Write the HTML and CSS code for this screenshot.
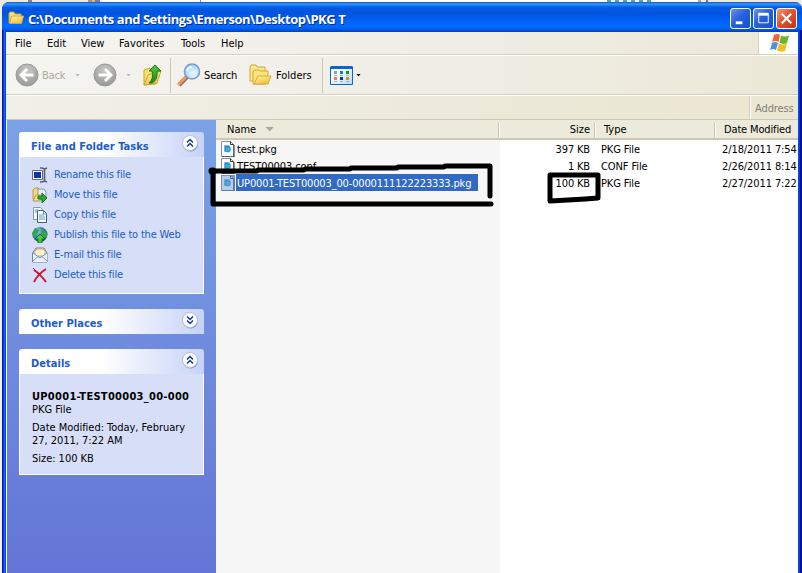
FILE: index.html
```html
<!DOCTYPE html>
<html lang="en">
<head>
<meta charset="utf-8">
<title>PKG T</title>
<link rel="stylesheet" href="styles.css">
</head>
<body>
<svg width="0" height="0" class="defs" aria-hidden="true">
  <defs>
    <linearGradient id="gold" x1="0" y1="0" x2="0.6" y2="1"><stop offset="0" stop-color="#fff6a8"/><stop offset="1" stop-color="#f3c040"/></linearGradient>
    <radialGradient id="grey" cx=".5" cy=".3" r=".7"><stop offset="0" stop-color="#c9c9c7"/><stop offset="1" stop-color="#999997"/></radialGradient>
    <radialGradient id="lens" cx=".6" cy=".65" r=".6"><stop offset="0" stop-color="#f0fcff"/><stop offset="1" stop-color="#9fd6f8"/></radialGradient>
    <linearGradient id="green" x1="0" y1="0" x2="0" y2="1"><stop offset="0" stop-color="#52c93e"/><stop offset="1" stop-color="#188a18"/></linearGradient>
    <radialGradient id="globe" cx=".35" cy=".3" r=".8"><stop offset="0" stop-color="#8fd0f5"/><stop offset=".5" stop-color="#3978c4"/><stop offset="1" stop-color="#173a80"/></radialGradient>
    <linearGradient id="screen" x1="0" y1="0" x2="1" y2="1"><stop offset="0.3" stop-color="#fff"/><stop offset="1" stop-color="#b5d8fa"/></linearGradient>
    <symbol id="file" viewBox="0 0 14 16"><path d="M.5.5h9l3 3v12H.5z" fill="#fff" stroke="#858fa0"/><path d="M9.5.5v3h3M13 4v12H1" fill="none" stroke="#26313f"/><path d="M3 4h6l1 7H3z" fill="#c4dbef"/><path d="M3.500 4.500h4l2 2v3l-2 2-4-1z" fill="#2987cf"/><path d="M5 6l4 1-1 3-3 1z" fill="#30b9d5"/></symbol>
    <symbol id="up" viewBox="0 0 18 18"><circle cx="9.500" cy="10" r="7.500" fill="#8094c8"/><circle cx="9" cy="9" r="7.500" fill="#fff" stroke="#b5c0df"/><path d="M6 8.500l3-3 3 3M6 12.500l3-3 3 3" fill="none" stroke="#0d3aa3" stroke-width="1.500"/></symbol>
    <symbol id="down" viewBox="0 0 18 18"><circle cx="9.500" cy="10" r="7.500" fill="#8094c8"/><circle cx="9" cy="9" r="7.500" fill="#fff" stroke="#b5c0df"/><path d="M6 5.500l3 3 3-3M6 9.500l3 3 3-3" fill="none" stroke="#0d3aa3" stroke-width="1.500"/></symbol>
  </defs>
</svg>
<div class="behind"><i class="b1"></i><i class="b2"></i><i class="b3"></i><i class="b4"></i><i class="b5"></i></div>
<main class="window">
  <header class="titlebar">
    <svg class="title-icon" viewBox="0 0 16 14"><path d="M1 12V2l1-1h4l1 2h6v3" fill="#fbe48b" stroke="#d39a28"/><path d="M3.500 5h12l-2 7.500H1.500z" fill="url(#gold)" stroke="#dca437"/></svg>
    <h1>C:\Documents and Settings\Emerson\Desktop\PKG T</h1>
    <div class="controls">
      <span class="ctl"><svg viewBox="0 0 20 20"><path d="M5 13h7v3H5z" fill="#fff"/></svg></span>
      <span class="ctl"><svg viewBox="0 0 20 20"><path d="M5 5.500h10v9H5z" fill="none" stroke="#fff"/><path d="M4.500 4h11v3h-11z" fill="#fff"/></svg></span>
      <span class="ctl close"><svg viewBox="0 0 20 20"><path d="M5 5l10 10M15 5L5 15" stroke="#fff" stroke-width="2.300"/></svg></span>
    </div>
  </header>
  <nav class="menubar">
    <span class="m1">File</span><span class="m2">Edit</span><span class="m3">View</span><span class="m4">Favorites</span><span class="m5">Tools</span><span class="m6">Help</span>
    <div class="flag"><svg viewBox="0 0 20 19" width="20" height="19"><path d="M4 2q3-2 6 0L8.500 9Q5 7 2 9z" fill="#f26534"/><path d="M11 2.500q4 2 8 0L17 10q-4 2-7.500-.5z" fill="#67b52c"/><path d="M2 10q3-2 6 0l-2 7q-3-2-6 0z" fill="#4c91df"/><path d="M9 10.500q4 2 8 0L15 18q-4 1.500-8-.5z" fill="#f4bd24"/></svg></div>
  </nav>
  <div class="toolbar">
    <svg class="nav-icon" viewBox="0 0 24 24"><circle cx="12" cy="12" r="11" fill="url(#grey)" stroke="#999"/><path d="M18.500 12H7M12 6l-6 6 6 6" fill="none" stroke="#fff" stroke-width="2.800"/></svg>
    <span class="back">Back</span><i class="drop dim d1"></i>
    <svg class="nav-icon forward" viewBox="0 0 24 24"><circle cx="12" cy="12" r="11" fill="url(#grey)" stroke="#999"/><path d="M5.500 12H17M12 6l6 6-6 6" fill="none" stroke="#fff" stroke-width="2.800"/></svg>
    <i class="drop dim d2"></i>
    <svg class="folder-up" viewBox="0 0 20 23"><path d="M1 6l6-2 1 2 5-1v15L1 21z" fill="#f9e16a" stroke="#d0a22c"/><path d="M5 11l13-4-4 12L1 21z" fill="url(#gold)" stroke="#d0a22c"/><path d="M6 7l6-6 6 6h-4q1 9-5 12H6q5-4 3-12z" fill="url(#green)" stroke="#187b20"/></svg>
    <i class="sep s1"></i>
    <svg class="magnifier" viewBox="0 0 24 24"><path d="M2 22l8-8" stroke="#8c6a74" stroke-width="4.500"/><path d="M1 22l8-8" stroke="#f29a50" stroke-width="3"/><circle cx="15" cy="8.500" r="7.500" fill="url(#lens)" stroke="#8298d0" stroke-width="1.600"/><path d="M10 8q1-4 5-4" stroke="#fff" fill="none" stroke-width="1.500"/></svg>
    <span class="search">Search</span>
    <svg class="folders-icon" viewBox="0 0 23 22"><path d="M1 3l1-2h5l1 2h8v4L4 17H1z" fill="#fbe791" stroke="#d6a832"/><path d="M4 8l1-2h5l1 1h8v3l-3 10H4z" fill="#fbe47c" stroke="#d6a832"/><path d="M5 20l4-8h13l-3 8z" fill="url(#gold)" stroke="#d6a832"/></svg>
    <span class="folders">Folders</span>
    <i class="sep s2"></i>
    <svg class="views" viewBox="0 0 23 19"><path d="M.5 1.500h22v17H.5z" fill="url(#screen)" stroke="#0867ce"/><path d="M1 0h21l1 1v2H0V1z" fill="#0867ce"/><path d="M4 5h3v3H4z" fill="#9494cf"/><path d="M10 5h3v3h-3z" fill="#087ed9"/><path d="M16 5h3v3h-3z" fill="#0a9c14"/><path d="M4 11h3v3H4z" fill="#ff7548"/><path d="M10 11h3v3h-3z" fill="#083990"/><path d="M16 11h3v3h-3z" fill="#cd9706"/><path d="M4 9.500h3m3 0h3m3 0h3M4 15.500h3m3 0h3m3 0h3" stroke="#a8b0b8"/></svg>
    <i class="drop d3"></i>
  </div>
  <div class="addressbar"><span>Address</span></div>
  <div class="content">
    <aside>
      <section class="panel tasks">
        <h2><span>File and Folder Tasks</span><svg width="18" height="18"><use href="#up"/></svg></h2>
        <ul>
          <li><svg viewBox="0 0 16 16"><path d="M.5 3.500h10v9H.5z" fill="#fff" stroke="#626b80"/><path d="M2 5h7v6H2z" fill="#0735aa"/><path d="M11 2h3v12h-3z" fill="#c9d0dc"/><path d="M8 1h2l2.500 1L15 1M12.500 2v12M8 15h2l2.500-1 2.500 1" fill="none" stroke="#566075" stroke-width="1.500"/></svg><span>Rename this file</span></li>
          <li><svg viewBox="0 0 16 16"><path d="M1 3l2-2h3l1 2h6v9H1z" fill="#f3d876" stroke="#b39853"/><path d="M6 2h6l2 3v7H6z" fill="#e9f1fc" stroke="#8595b0"/><path d="M1 14l3-6h7l-3 6z" fill="#f9df7a" stroke="#b39853"/><path d="M6 9h4V6l5 5-5 5v-4H6z" fill="#28a92b" stroke="#16761c"/></svg><span>Move this file</span></li>
          <li><svg viewBox="0 0 16 16"><path d="M1.500.5h7l2 2v10h-9z" fill="#f4faff" stroke="#8298b4"/><path d="M5.500 3.500h6l3 3v9h-9z" fill="#fff" stroke="#405b80"/><path d="M3 3h3M3 5h2M7 8h5M7 10h6M7 12h6M11.500 4v3h3" fill="none" stroke="#5798c9"/></svg><span>Copy this file</span></li>
          <li><svg viewBox="0 0 16 16"><circle cx="8" cy="7.500" r="7.500" fill="url(#globe)"/><path d="M3 1l4 2-1 3-3 2-2 3-1-5zM10 1l5 5v5l-4-1-2-4z" fill="#35a643"/><path d="M8 7l5 5h-3v4H6v-4H3z" fill="#44ce3a" stroke="#14751b"/></svg><span>Publish this file to the Web</span></li>
          <li><svg viewBox="0 0 16 16"><path d="M.5 6L4 1h8l3 5v9H.5z" fill="#c4d7ef" stroke="#7185a6"/><path d="M3 4l2-2h6l2 2v5H3z" fill="#fff0cf" stroke="#e3aa55"/><path d="M1 6l7 5 7-5v9H1z" fill="#e7f2ff"/><path d="M1 6l7 5 7-5M1 14l5-4.500M15 14l-5-4.500" fill="none" stroke="#7b94b8"/></svg><span>E-mail this file</span></li>
          <li><svg viewBox="0 0 16 16"><path d="M2 3q6 4 12 12M14 2Q6 7 2 15" fill="none" stroke="#cf1738" stroke-width="2"/><path d="M1 1l5 5" stroke="#cf1738"/></svg><span>Delete this file</span></li>
        </ul>
      </section>
      <section class="panel"><h2><span>Other Places</span><svg width="18" height="18"><use href="#down"/></svg></h2></section>
      <section class="panel details">
        <h2><span>Details</span><svg width="18" height="18"><use href="#up"/></svg></h2>
        <div class="info"><b>UP0001-TEST00003_00-000</b><p>PKG File</p><p class="gap">Date Modified: Today, February<br>27, 2011, 7:22 AM</p><p class="gap">Size: 100 KB</p></div>
      </section>
    </aside>
    <section class="list">
      <div class="head"><span class="name">Name<i class="sort"></i></span><span class="size">Size</span><span class="type">Type</span><span class="date">Date Modified</span></div>
      <div class="rows">
        <div class="row"><span class="fname"><svg><use href="#file"/></svg><span>test.pkg</span></span><span class="num">397 KB</span><span class="kind">PKG File</span><span class="when">2/18/2011 7:54</span></div>
        <div class="row"><span class="fname"><svg><use href="#file"/></svg><span>TEST00003.conf</span></span><span class="num">1 KB</span><span class="kind">CONF File</span><span class="when">2/26/2011 8:14</span></div>
        <div class="row selected"><span class="fname"><svg><use href="#file"/></svg><span>UP0001-TEST00003_00-0000111122223333.pkg</span></span><span class="num">100 KB</span><span class="kind">PKG File</span><span class="when">2/27/2011 7:22</span></div>
      </div>
    </section>
  </div>
</main>
<svg class="marks" viewBox="0 0 802 573"><g fill="none" stroke="#000" stroke-linecap="round" stroke-linejoin="round"><path d="M212 171H257L258 170H304L305 169H350L351 168H397L398 167H444L445 166H490V196" stroke-width="5"/><path d="M213 171V204H491" stroke-width="5"/><path d="M212 171h1" stroke-width="7"/><path d="M550 175H598V198L585 199 568 200 550 201V176" stroke-width="5"/></g></svg>
</body>
</html>
```
FILE: styles.css
```css
* { box-sizing: border-box; }
body { margin: 0; width: 802px; height: 573px; overflow: hidden; background: #f3f1e5; font: 11px/13px "DejaVu Sans Condensed", "DejaVu Sans", sans-serif; font-stretch: condensed; color: #000; }
h1, h2, p, ul { margin: 0; padding: 0; }
span { white-space: nowrap; }
svg { display: block; flex: none; }
.defs { position: absolute; }
.behind { position: absolute; top: 0; left: 0; width: 802px; height: 3px; background: linear-gradient(90deg, #eeeadb 102px, #fff 102px 700px, #eeeadb 700px); }
.behind i { position: absolute; top: 0; height: 2px; }
.b1 { left: 28px; width: 4px; background: #888; }
.b2 { left: 88px; width: 12px; background: linear-gradient(90deg, #999 4px, #e2c04c 4px 7px, #7775bd 7px); }
.b3 { left: 200px; width: 1px; background: #7997c4; }
.b4 { left: 607px; width: 47px; background: repeating-linear-gradient(90deg, #4ba8b8 0 4px, #fff 4px 8px); }
.b5 { left: 698px; width: 10px; background: linear-gradient(90deg, #a9a7a0 3px, #eee 3px 8px, #6b6ac2 8px); }
.window { position: relative; width: 800px; height: 571px; margin: 2px 0 0 2px; display: flex; flex-direction: column; border-style: solid; border-width: 0 4px 0 4px; border-color: #0840df; border-radius: 7px 7px 0 0; background: #fff; }
.window::before, .window::after { content: ""; position: absolute; top: 28px; bottom: 0; width: 4px; }
.window::before { left: -4px; background: linear-gradient(90deg, #001aca 1px, #0838e0 1px 2px, #1668ef 2px 3px, #0547e5 3px); }
.window::after { right: -4px; background: linear-gradient(90deg, #0747e8 1px, #0739dc 1px 2px, #0014aa 2px 3px, #000f84 3px); }
.titlebar { height: 30px; flex: none; margin: 0 -4px; padding: 0 5px 0 6px; display: flex; align-items: center; border-radius: 7px 7px 0 0; background: linear-gradient(#0753cb 0, #3d95ff 2px, #0872f5 4px, #0557de 6px, #0053df 12px, #0062fa 19px, #006aff 25px, #0054dd 28px, #003fbd 30px); }
.title-icon { width: 16px; height: 14px; margin-top: 1px; }
h1 { flex: 1; margin-left: 4px; padding-top: 3px; color: #fff; font: bold 13px/18px "Open Sans", sans-serif; text-shadow: 1px 1px #0c2887; white-space: nowrap; letter-spacing: -.46px; }
.controls { display: flex; gap: 2px; padding-top: 3px; }
.ctl { width: 21px; height: 21px; border: 1px solid #fff; border-radius: 3px; background: linear-gradient(135deg, #7192ed, #2860dd 45%, #164fcb); }
.ctl svg { width: 19px; height: 19px; }
.close { background: linear-gradient(135deg, #ed9c80, #df5433 45%, #c23314); }
.menubar, .toolbar { background: linear-gradient(90deg, #f4f4f1, #efede4 60%, #ece8d7); }
.menubar { height: 23px; flex: none; display: flex; align-items: center; border-bottom: 1px solid #d5d0bd; padding-left: 9px; }
.menubar span { height: 13px; }
.m1 { width: 32px; } .m2 { width: 34px; } .m3 { width: 38px; } .m4 { width: 62px; letter-spacing: .1px; } .m5 { width: 40px; }
.flag { width: 40px; height: 22px; margin-left: auto; padding: 1px 0 0 11px; border-left: 1px solid #d5d0bd; background: #fff; }
.toolbar { height: 40px; flex: none; display: flex; align-items: center; border-top: 1px solid #fff; border-bottom: 1px solid #d5d0bd; padding-left: 9px; }
.nav-icon { width: 24px; height: 24px; }
.back { width: 32px; margin-left: 3px; color: #aaa89b; letter-spacing: -.2px; }
.drop { width: 5px; height: 3px; background: #000; clip-path: polygon(0 0, 100% 0, 50% 100%); }
.dim { background: #b9b6a7; }
.forward { margin-left: 13px; }
.d1 { margin-left: 1px; } .d2 { margin-left: 9px; }
.folder-up { width: 20px; height: 23px; margin-left: 12px; }
.sep { width: 1px; height: 35px; background: #cbc6b0; }
.s1 { margin-left: 7px; }
.magnifier { width: 24px; height: 24px; margin-left: 6px; }
.search { width: 42px; margin-left: 3px; letter-spacing: -.15px; }
.folders-icon { width: 23px; height: 22px; margin-left: 3px; }
.folders { width: 43px; margin-left: 4px; }
.s2 { margin-left: 3px; }
.views { width: 23px; height: 19px; margin-left: 7px; }
.d3 { margin-left: 3px; }
.addressbar { height: 25px; flex: none; border-top: 1px solid #fff; border-bottom: 1px solid #cdc9b5; background: linear-gradient(90deg, #f1f0e8, #ebe8d7 70%, #ebe7d2); }
.addressbar span { float: right; width: 48px; height: 23px; padding: 6px 0 0 4px; border-left: 1px solid #fff; box-shadow: -1px 0 #d5d0bd; color: #827f74; letter-spacing: -.1px; }
.content { height: 453px; display: flex; padding-left: 1px; }
aside { width: 209px; flex: none; padding: 12px 12px; background: linear-gradient(#7ba2e7, #6375d6); }
.panel { margin-bottom: 15px; }
h2 { height: 25px; padding: 0 5px 0 12px; display: flex; align-items: center; justify-content: space-between; border-radius: 3px 3px 0 0; background: linear-gradient(90deg, #fff 45%, #c6d3f7); color: #215dc6; font: bold 11px/13px "DejaVu Sans Condensed", sans-serif; }
h2 span { padding-top: 3px; letter-spacing: .04px; }
h2 svg { margin-top: -3px; }
ul { list-style: none; height: 137px; padding: 7px 0 0 12px; border: 1px solid #fff; border-top: 0; background: #d6dff7; }
li { height: 20px; display: flex; align-items: center; gap: 6px; color: #215dc6; letter-spacing: -.19px; }
li svg { width: 16px; height: 16px; margin-top: 1px; }
.info { height: 101px; border: 1px solid #fff; border-top: 0; padding: 16px 0 0 12px; background: #d6dff7; overflow: hidden; }
.info b { display: block; height: 13px; white-space: nowrap; letter-spacing: .29px; }
.info p { letter-spacing: -.03px; }
.gap { margin-top: 5px; white-space: nowrap; }
.list { flex: 1; min-width: 0; overflow: hidden; background: linear-gradient(90deg, #f7f7f7 284px, #fff 284px); }
.head, .row { display: grid; grid-template-columns: 283px 96px 120px 1fr; }
.head { height: 20px; align-items: center; padding-top: 1px; border-bottom: 2px solid #ccc8b5; background: #ebeadb; }
.head > span { height: 14px; position: relative; border-right: 1px solid #c7c3b1; box-shadow: 1px 0 #fff; }
.head .name { padding-left: 11px; display: flex; }
.sort { margin: 4px 0 0 9px; width: 9px; height: 5px; background: #aca899; clip-path: polygon(0 0, 100% 0, 50% 100%); }
.head .size { text-align: right; padding-right: 4px; }
.head .type { padding-left: 9px; }
.head .date { padding-left: 9px; border: 0; box-shadow: none; letter-spacing: -.15px; }
.row { height: 17px; align-items: center; }
.fname { display: flex; align-items: center; padding-left: 5px; height: 17px; }
.fname svg { width: 14px; height: 16px; }
.fname span { height: 17px; padding: 3px 1px 1px; margin-left: 1px; letter-spacing: -.1px; }
.selected .fname span { width: 242px; background: #316ac5; color: #fff; letter-spacing: -.15px; }
.selected .fname svg { background: #6d95d3; }
.selected .fname svg use { opacity: .5; }
.num, .kind, .when { padding-top: 2px; }
.num { text-align: right; padding-right: 5px; letter-spacing: -.15px; }
.kind { padding-left: 6px; letter-spacing: -.1px; }
.when { padding-left: 7px; letter-spacing: -.1px; }
.marks { position: absolute; left: 0; top: 0; width: 802px; height: 573px; pointer-events: none; }
```
